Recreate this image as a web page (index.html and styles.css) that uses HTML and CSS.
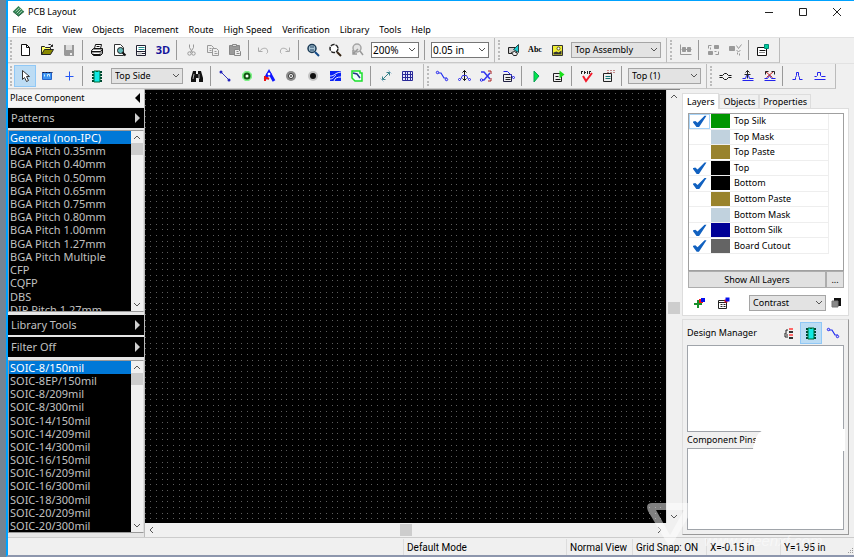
FILE: index.html
```html
<!DOCTYPE html>
<html lang="en">
<head>
<meta charset="utf-8">
<title>PCB Layout</title>
<link rel="stylesheet" href="styles.css">
</head>
<body>
<svg class="defs" aria-hidden="true">
  <symbol id="new" viewBox="-.5 -.5 16 16"><path d="M4 2h5l3 3v8H4z" fill="#fff" stroke="#111"/><path d="M9 2v3h3" fill="none" stroke="#111"/></symbol>
  <symbol id="open" viewBox="-.5 -.5 16 16"><path d="M2 12V4h3l1 1h5v2" fill="#ffff66" stroke="#222"/><path d="M2 12l3-5h9l-3 5z" fill="#8a8a00" stroke="#222"/><path d="M9 2h2l2 2m0-2v2h-2" fill="none" stroke="#222"/></symbol>
  <symbol id="save" viewBox="0 0 16 16"><path d="M3 3h10v11H4l-1-1z" fill="#999"/><path d="M5 3h6v5H5z" fill="#ddd"/><path d="M9 11h2v2H9z" fill="#eee"/></symbol>
  <symbol id="print" viewBox="-.5 -.5 16 16"><path d="M5 6l1-4h6l-1 4" fill="#fff" stroke="#111"/><path d="M2 8l2-2h9v5l-2 2H4l-2-2z" fill="#999" stroke="#111"/><path d="M3 8h8M4 11h6" stroke="#fff"/><path d="M2 9h9M3 12h8M11 9l2-2M7 4h3" stroke="#111"/></symbol>
  <symbol id="preview" viewBox="-.5 -.5 16 16"><path d="M3 2h6l3 3v8H3z" fill="#fff" stroke="#333"/><circle cx="9" cy="8" r="3" fill="#6bb" stroke="#222"/><path d="M11 10l3 3" stroke="#111" stroke-width="2"/></symbol>
  <symbol id="titles" viewBox="-.5 -.5 16 16"><path d="M3 3h9v10H3z" fill="#fff" stroke="#223"/><path d="M5 5h6M5 7h6" stroke="#288"/><path d="M3 9h9M8 11h4" stroke="#223"/><path d="M4 10h4v2H4z" fill="#bbb"/></symbol>
  <symbol id="cut" viewBox="-.5 -.5 16 16"><path d="M6 2v3l3 5M10 2v3l-3 5" stroke="#999" fill="none"/><circle cx="6" cy="11" r="1.700" fill="none" stroke="#999"/><circle cx="10" cy="11" r="1.700" fill="none" stroke="#999"/></symbol>
  <symbol id="copy" viewBox="-.5 -.5 16 16"><path d="M2 3h4l2 2v5H2z" fill="#eee" stroke="#999"/><path d="M7 6h4l2 2v5H7z" fill="#eee" stroke="#999"/><path d="M4 6h2M4 8h2M9 9h2M9 11h3" stroke="#999"/></symbol>
  <symbol id="paste" viewBox="-.5 -.5 16 16"><path d="M2 3h10v9H2z" fill="#999" stroke="#888"/><path d="M5 2h4v2H5z" fill="#ddd" stroke="#888"/><path d="M7 7h4l2 2v4H7z" fill="#eee" stroke="#888"/><path d="M9 9h2M9 11h3" stroke="#888"/></symbol>
  <symbol id="undo" viewBox="-.5 -.5 16 16"><path d="M3 5v4h4M4 9c2-4 9-5 8 1l-1 1" fill="none" stroke="#aaa"/></symbol>
  <symbol id="redo" viewBox="-.5 -.5 16 16"><path d="M12 5v4H8M11 9c-2-4-9-5-8 1l1 1" fill="none" stroke="#aaa"/></symbol>
  <symbol id="zoomwin" viewBox="0 0 16 16"><circle cx="7" cy="6.500" r="4" fill="#a8c4d4" stroke="#1a3a55" stroke-width="1.500"/><path d="M5 5h4M5 8h4" stroke="#246"/><path d="M10 10l4 4" stroke="#124a88" stroke-width="2"/></symbol>
  <symbol id="zoomin" viewBox="0 0 16 16"><circle cx="7" cy="6.500" r="4" fill="#fff" stroke="#222" stroke-width="1.500" stroke-dasharray="4 1"/><path d="M10 10l4 4" stroke="#321" stroke-width="2"/></symbol>
  <symbol id="zoomback" viewBox="0 0 16 16"><circle cx="8" cy="6" r="4" fill="#e4e4e4" stroke="#a5a5a5" stroke-width="1.500"/><path d="M11 9l3 4M4 12l5-5M4 8v4h4" stroke="#999" fill="none" stroke-width="1.500"/></symbol>
  <symbol id="place" viewBox="-.5 -.5 16 16"><path d="M3 5h8v6H3z" fill="#ccc" stroke="#222"/><path d="M8 7l5-5v8z" fill="#18cbd0" stroke="#244"/><path d="M6 10l3-1 3 2-1 2H8z" fill="#eee" stroke="#222"/></symbol>
  <symbol id="picture" viewBox="-.5 -.5 16 16"><path d="M3 3h10v10H3z" fill="#f1ee34" stroke="#333"/><path d="M4 12v-2l3-1 2 1 3-2v4z" fill="#333"/><circle cx="9" cy="6" r="1.500" fill="#fff" stroke="#552"/></symbol>
  <symbol id="align" viewBox="-.5 -.5 16 16"><path d="M3 2v10h11" fill="none" stroke="#999"/><path d="M5 5h3v4H5zM10 5h3v4h-3z" fill="#999" stroke="#999"/><path d="M4 7h10" stroke="#999"/></symbol>
  <symbol id="rotate" viewBox="-.5 -.5 16 16"><path d="M9 3h4v3H9zM3 9h4v3H3z" fill="#999" stroke="#999"/><path d="M3 6V3h3M5 7v-2M13 9v3h-3M9 9h2" fill="none" stroke="#999"/></symbol>
  <symbol id="unroute" viewBox="-.5 -.5 16 16"><path d="M2 4h5v4H2z" fill="#999" stroke="#999"/><path d="M9 3l2 3 3-4M9 8l2 1 2-1M10 12v-2M12 13v-2" fill="none" stroke="#999"/></symbol>
  <symbol id="report" viewBox="-.5 -.5 16 16"><path d="M2 5h9v8H2z" fill="#fff" stroke="#111"/><path d="M4 8h6" stroke="#111"/><path d="M4 10h6" stroke="#111" stroke-dasharray="1 1"/><path d="M9 2h4v4H9z" fill="#0c9" stroke="#087"/></symbol>
  <symbol id="pointer" viewBox="-.5 -.5 16 16"><path d="M5 2v9l2-2 2 4 2-1-2-4h3z" fill="#fff" stroke="#333"/></symbol>
  <symbol id="select" viewBox="-.5 -.5 16 16"><path d="M3 4h9v7H3z" fill="#3d94f2" stroke="#2463cc"/><path d="M3 4h10" stroke="#113" stroke-dasharray="2 1"/><path d="M8 8V6h2v2M5 6v2" stroke="#ceefff" fill="none"/></symbol>
  <symbol id="cross" viewBox="-.5 -.5 16 16"><path d="M8 3v9M4 8h8" stroke="#2457f5"/></symbol>
  <symbol id="chip" viewBox="0 0 16 16"><path d="M3 4h10M3 7h10M3 10h10M3 13h10" stroke="#043" stroke-width="2"/><path d="M5 3h6v11H5z" fill="#10e9e4" stroke="#063"/><path d="M7 3h2v1H7z" fill="#063"/></symbol>
  <symbol id="find" viewBox="0 0 16 16"><path d="M4 3h3v3h2V3h3l2 7v4h-4v-4H7v4H2v-4z" fill="#111"/><path d="M5 6l-1 5M10 6v5" stroke="#aaa"/></symbol>
  <symbol id="trace" viewBox="0 0 16 16"><path d="M4 4l8 8" stroke="#33b"/><circle cx="4" cy="4" r="1.500" fill="#22b"/><circle cx="12" cy="12" r="1.500" fill="#22b"/></symbol>
  <symbol id="via" viewBox="0 0 16 16"><path d="M3 6l3-3h4l3 3v4l-3 3H6l-3-3z" fill="#7df187"/><circle cx="8" cy="8" r="2.500" fill="#fff" stroke="#151" stroke-width="2"/></symbol>
  <symbol id="atrace" viewBox="0 0 16 16"><path d="M4 11L8 4l5 9" fill="none" stroke="#1018ff" stroke-width="3"/><circle cx="8" cy="6" r="2" fill="#fff" stroke="#00f"/><path d="M4 8v5M4 9l4 2" stroke="#f01010" stroke-width="2"/></symbol>
  <symbol id="pad" viewBox="0 0 16 16"><circle cx="8" cy="8" r="5" fill="#8b8b8b"/><circle cx="8" cy="8" r="2.500" fill="#fff" stroke="#333"/><circle cx="8" cy="8" r="1" fill="#444"/></symbol>
  <symbol id="hole" viewBox="0 0 16 16"><circle cx="8" cy="8" r="5" fill="#c4c4c4"/><circle cx="8" cy="8" r="3" fill="#111"/></symbol>
  <symbol id="pour" viewBox="0 0 16 16"><path d="M3 3h11v10H3z" fill="#0b22f5"/><path d="M3 8c5 0 4-3 11-4M3 11c4 0 4-3 6-4M7 13c1-3 3-4 7-4" stroke="#eef" fill="none"/></symbol>
  <symbol id="cutout" viewBox="0 0 16 16"><path d="M3 3h8v2h2v8H6l-3-3z" fill="#effffa" stroke="#1be02c" stroke-width="1.500"/><path d="M4 5l4 1 3 4" stroke="#238" stroke-width="1.500" fill="none"/></symbol>
  <symbol id="dimension" viewBox="-.5 -.5 16 16"><path d="M5 11l7-7M5 8v3h3M12 7V4H9" fill="none" stroke="#38828a"/><path d="M3 10l3 3M11 2l3 3" stroke="#9bc"/></symbol>
  <symbol id="table" viewBox="-.5 -.5 16 16"><path d="M3 3h10v9H3zM3 6h10M3 9h10M6 3v9M8 3v9M11 3v9" fill="#e4e4fa" stroke="#2a2a98"/></symbol>
  <symbol id="route" viewBox="0 0 16 16"><path d="M4 5h3l3 5h3" fill="none" stroke="#1f2df0" stroke-width="1.200"/><circle cx="3.500" cy="4.500" r="1.200" fill="#dde" stroke="#22e"/><circle cx="12.500" cy="11.500" r="1.200" fill="#dde" stroke="#22e"/></symbol>
  <symbol id="routeup" viewBox="-.5 -.5 16 16"><path d="M8 2v10M6 4l2-2 2 2M6 10l2 2 2-2" fill="none" stroke="#111"/><path d="M4 11l2-4h4l2 4" fill="none" stroke="#33d"/><circle cx="3" cy="11" r="1" fill="#fff" stroke="#22e"/><circle cx="13" cy="11" r="1" fill="#fff" stroke="#22e"/></symbol>
  <symbol id="routex" viewBox="0 0 16 16"><path d="M3 4h3l6 7M3 12h3l6-7" fill="none" stroke="#33e" stroke-width="1.500"/><path d="M10 3h3v3M10 13h3v-3" fill="none" stroke="#a22"/><circle cx="3.500" cy="12" r="1.200" fill="#fff" stroke="#22e"/></symbol>
  <symbol id="routesetup" viewBox="-.5 -.5 16 16"><path d="M3 6h8v7H3z" fill="#eee" stroke="#224"/><path d="M5 9h5M5 11h5" stroke="#222"/><path d="M3 3h4l5 5" stroke="#22e" fill="none"/><circle cx="13" cy="9" r="1" fill="#fff" stroke="#22e"/></symbol>
  <symbol id="run" viewBox="0 0 16 16"><path d="M6 3l5 5-5 6z" fill="#00e84b" stroke="#0a9e55"/></symbol>
  <symbol id="runsetup" viewBox="-.5 -.5 16 16"><path d="M3 5h8v8H3z" fill="#eee" stroke="#222"/><path d="M5 8h3M5 11h5" stroke="#111"/><path d="M9 2l5 4-5 4z" fill="#1be01c"/></symbol>
  <symbol id="drc" viewBox="0 0 16 16"><path d="M3 3h1v3H3zM4 3h1v1H4zM6 3h1v3H6zM7 4h1v1H7zM9 3h1v3H9zM11 3h1v3h-1zM12 3h1v1h-1z" fill="#222"/><path d="M5 8l3 5 6-8" fill="none" stroke="#f3192a" stroke-width="2"/></symbol>
  <symbol id="drcsetup" viewBox="-.5 -.5 16 16"><path d="M3 5h8v8H3z" fill="#eee" stroke="#222"/><path d="M5 8h5M5 10h5" stroke="#177"/><path d="M7 2h1M10 2h1M13 2h1M7 4h1M10 4h1M13 4h1" stroke="#922"/></symbol>
  <symbol id="diffpair" viewBox="-.5 -.5 16 16"><path d="M2 7h3l2-2h2l2 2h3M2 9h3l2 2h2l2-2h3" fill="none" stroke="#111"/></symbol>
  <symbol id="phase" viewBox="-.5 -.5 16 16"><path d="M3 12h11M3 10h3l1-3h2l1 3h4" fill="none" stroke="#22e"/><path d="M8 2v8M6 4l2-2 2 2M5 6h6" stroke="#222" fill="none"/></symbol>
  <symbol id="phasex" viewBox="-.5 -.5 16 16"><path d="M3 12h11M3 10h3l2-3 2 3h4" fill="none" stroke="#22e"/><path d="M4 3l7 6M12 3L5 9" stroke="#b22"/><path d="M4 6V3h3M10 3h3v3" fill="none" stroke="#222"/></symbol>
  <symbol id="pulse" viewBox="-.5 -.5 16 16"><path d="M3 11h3V9l1-2V4h2v3l1 2v2h3" fill="none" stroke="#22e"/></symbol>
  <symbol id="pulse2" viewBox="-.5 -.5 16 16"><path d="M3 11h11M3 8h2l1-1V4h3v3l1 1h4" fill="none" stroke="#22e"/></symbol>
  <symbol id="addlayer" viewBox="0 0 16 16"><path d="M7 5v8M3 9h8" stroke="#17902b" stroke-width="2"/><path d="M8 4h4v4H8z" fill="#f01515"/><path d="M10 3h4v4h-4z" fill="#0610ed"/></symbol>
  <symbol id="layerset" viewBox="-.5 -.5 16 16"><path d="M2 5h8v8H2zM2 7h8" fill="#fff" stroke="#222"/><path d="M4 9h5M4 11h5" stroke="#222" stroke-dasharray="2 1"/><path d="M8 4h3v3H8z" fill="#f01515"/><path d="M9 2h4v4H9z" fill="#0610ed"/></symbol>
  <symbol id="contrast" viewBox="0 0 16 16"><path d="M6 3h7v8H6z" fill="#111"/><path d="M4 6h6v6H4z" fill="#888" stroke="#777"/></symbol>
  <symbol id="tree" viewBox="0 0 16 16"><path d="M8 4h4M8 10h4" stroke="#f66" stroke-width="2"/><path d="M8 7h4M8 13h4" stroke="#333" stroke-width="2"/><path d="M7 5H5v2M6 8H4v4h3M5 10h2" fill="none" stroke="#222"/></symbol>
  <symbol id="down" viewBox="0 0 8 8"><path d="M1 2l3 3 3-3" fill="none" stroke="#555"/></symbol>
  <symbol id="logo" viewBox="0 0 14 14"><path d="M7 1l6 6-6 5-6-5z" fill="#2f8050"/><path d="M1 7l6 5 6-5" stroke="#256144" fill="none"/><path d="M4 7l4-4M5 9l5-5M7 10l4-4" stroke="#bce0c5"/></symbol>
</svg>

<div class="desktop">
<div class="window">
  <header class="titlebar">
    <svg class="logo"><use href="#logo"/></svg>
    <h1>PCB Layout</h1>
    <button class="wbtn" aria-label="Minimize"><svg viewBox="0 0 10 10"><path d="M1 5.500h8" stroke="#222"/></svg></button>
    <button class="wbtn" aria-label="Maximize"><svg viewBox="0 0 10 10"><path d="M1.500 1.500h7v7h-7z" fill="none" stroke="#222"/></svg></button>
    <button class="wbtn" aria-label="Close"><svg viewBox="0 0 10 10"><path d="M1 1l8 8M9 1l-8 8" stroke="#222"/></svg></button>
  </header>
  <nav class="menu">
    <button>File</button><button>Edit</button><button>View</button><button>Objects</button><button>Placement</button><button>Route</button><button>High Speed</button><button>Verification</button><button>Library</button><button>Tools</button><button>Help</button>
  </nav>

  <div class="bars">
    <div class="bar">
      <button class="tb" aria-label="New"><svg><use href="#new"/></svg></button>
      <button class="tb" aria-label="Open"><svg><use href="#open"/></svg></button>
      <button class="tb" aria-label="Save"><svg><use href="#save"/></svg></button>
      <i class="sep"></i>
      <button class="tb" aria-label="Print"><svg><use href="#print"/></svg></button>
      <button class="tb" aria-label="Preview"><svg><use href="#preview"/></svg></button>
      <button class="tb" aria-label="Titles"><svg><use href="#titles"/></svg></button>
      <button class="tb threed">3D</button>
      <i class="sep"></i>
      <button class="tb" aria-label="Cut"><svg><use href="#cut"/></svg></button>
      <button class="tb" aria-label="Copy"><svg><use href="#copy"/></svg></button>
      <button class="tb" aria-label="Paste"><svg><use href="#paste"/></svg></button>
      <i class="sep"></i>
      <button class="tb" aria-label="Undo"><svg><use href="#undo"/></svg></button>
      <button class="tb" aria-label="Redo"><svg><use href="#redo"/></svg></button>
      <i class="sep"></i>
      <button class="tb" aria-label="Zoom window"><svg><use href="#zoomwin"/></svg></button>
      <button class="tb" aria-label="Zoom in"><svg><use href="#zoomin"/></svg></button>
      <button class="tb" aria-label="Zoom back"><svg><use href="#zoomback"/></svg></button>
      <span class="combo white zoom"><select aria-label="Zoom"><option>200%</option></select><svg><use href="#down"/></svg></span>
      <i class="sep"></i>
      <span class="combo white grid"><select aria-label="Grid"><option>0.05 in</option></select><svg><use href="#down"/></svg></span>
    </div>
    <div class="bar">
      <button class="tb" aria-label="Place"><svg><use href="#place"/></svg></button>
      <button class="tb abc">Abc</button>
      <button class="tb" aria-label="Picture"><svg><use href="#picture"/></svg></button>
      <span class="combo assembly"><select aria-label="Drawing layer"><option>Top Assembly</option></select><svg><use href="#down"/></svg></span>
    </div>
    <div class="bar">
      <button class="tb" aria-label="Align"><svg><use href="#align"/></svg></button>
      <i class="sep"></i>
      <button class="tb" aria-label="Rotate"><svg><use href="#rotate"/></svg></button>
      <button class="tb" aria-label="Unroute"><svg><use href="#unroute"/></svg></button>
      <i class="sep"></i>
      <button class="tb" aria-label="Report"><svg><use href="#report"/></svg></button>
    </div>
  </div>
  <div class="bars">
    <div class="bar">
      <button class="tb on" aria-label="Pointer"><svg><use href="#pointer"/></svg></button>
      <button class="tb" aria-label="Select"><svg><use href="#select"/></svg></button>
      <button class="tb" aria-label="Origin"><svg><use href="#cross"/></svg></button>
      <i class="sep"></i>
      <button class="tb" aria-label="Component"><svg><use href="#chip"/></svg></button>
      <span class="combo side"><select aria-label="Side"><option>Top Side</option></select><svg><use href="#down"/></svg></span>
      <button class="tb" aria-label="Find"><svg><use href="#find"/></svg></button>
      <i class="sep"></i>
      <button class="tb" aria-label="Ratline"><svg><use href="#trace"/></svg></button>
      <button class="tb" aria-label="Via"><svg><use href="#via"/></svg></button>
      <button class="tb" aria-label="Static via"><svg><use href="#atrace"/></svg></button>
      <button class="tb" aria-label="Pad"><svg><use href="#pad"/></svg></button>
      <button class="tb" aria-label="Mounting hole"><svg><use href="#hole"/></svg></button>
      <button class="tb" aria-label="Copper pour"><svg><use href="#pour"/></svg></button>
      <button class="tb" aria-label="Board outline"><svg><use href="#cutout"/></svg></button>
      <i class="sep"></i>
      <button class="tb" aria-label="Dimension"><svg><use href="#dimension"/></svg></button>
      <button class="tb" aria-label="Table"><svg><use href="#table"/></svg></button>
    </div>
    <div class="bar">
      <button class="tb" aria-label="Route manual"><svg><use href="#route"/></svg></button>
      <button class="tb" aria-label="Edit traces"><svg><use href="#routeup"/></svg></button>
      <button class="tb" aria-label="Free edit"><svg><use href="#routex"/></svg></button>
      <button class="tb" aria-label="Route setup"><svg><use href="#routesetup"/></svg></button>
      <i class="sep"></i>
      <button class="tb" aria-label="Run autorouter"><svg><use href="#run"/></svg></button>
      <button class="tb" aria-label="Autorouter setup"><svg><use href="#runsetup"/></svg></button>
      <i class="sep"></i>
      <button class="tb" aria-label="Check rules"><svg><use href="#drc"/></svg></button>
      <button class="tb" aria-label="Rules setup"><svg><use href="#drcsetup"/></svg></button>
      <i class="sep"></i>
      <span class="combo layer"><select aria-label="Current layer"><option>Top (1)</option></select><svg><use href="#down"/></svg></span>
    </div>
    <div class="bar">
      <button class="tb" aria-label="Differential pair"><svg><use href="#diffpair"/></svg></button>
      <button class="tb" aria-label="Phase tuning"><svg><use href="#phase"/></svg></button>
      <button class="tb" aria-label="Delete phase"><svg><use href="#phasex"/></svg></button>
      <i class="sep"></i>
      <button class="tb" aria-label="Meander"><svg><use href="#pulse"/></svg></button>
      <button class="tb" aria-label="Pair meander"><svg><use href="#pulse2"/></svg></button>
    </div>
  </div>

  <main class="work">
    <aside class="left">
      <div class="place-head"><span>Place Component</span><i class="tri back"></i></div>
      <button class="fold">Patterns<i class="tri"></i></button>
      <div class="listbox first">
        <ul>
          <li class="sel">General (non-IPC)</li><li>BGA Pitch 0.35mm</li><li>BGA Pitch 0.40mm</li><li>BGA Pitch 0.50mm</li><li>BGA Pitch 0.65mm</li><li>BGA Pitch 0.75mm</li><li>BGA Pitch 0.80mm</li><li>BGA Pitch 1.00mm</li><li>BGA Pitch 1.27mm</li><li>BGA Pitch Multiple</li><li>CFP</li><li>CQFP</li><li>DBS</li><li>DIP Pitch 1.27mm</li>
        </ul>
        <div class="vbar"><svg class="up"><use href="#down"/></svg><i class="thumb"></i><svg class="end"><use href="#down"/></svg></div>
      </div>
      <button class="fold">Library Tools<i class="tri"></i></button>
      <button class="fold">Filter Off<i class="tri"></i></button>
      <div class="listbox second">
        <ul>
          <li class="sel">SOIC-8/150mil</li><li>SOIC-8EP/150mil</li><li>SOIC-8/209mil</li><li>SOIC-8/300mil</li><li>SOIC-14/150mil</li><li>SOIC-14/209mil</li><li>SOIC-14/300mil</li><li>SOIC-16/150mil</li><li>SOIC-16/209mil</li><li>SOIC-16/300mil</li><li>SOIC-18/300mil</li><li>SOIC-20/209mil</li><li>SOIC-20/300mil</li>
        </ul>
        <div class="vbar"><svg class="up"><use href="#down"/></svg><i class="thumb"></i><svg class="end"><use href="#down"/></svg></div>
      </div>
    </aside>

    <section class="board">
      <svg class="dots" aria-label="Board grid">
        <defs><pattern id="grid" x="5" y="3" width="17" height="17" patternUnits="userSpaceOnUse">
          <path d="M0 0h1v1H0zM6 0h1v1H6zM12 0h1v1h-1zM0 6h1v1H0zM6 6h1v1H6zM12 6h1v1h-1zM0 12h1v1H0zM6 12h1v1H6zM12 12h1v1h-1z" fill="#5c5c5c"/>
        </pattern></defs>
        <rect width="100%" height="100%" fill="#000"/><rect width="100%" height="100%" fill="url(#grid)"/>
      </svg>
      <div class="vbar"><svg class="up"><use href="#down"/></svg><i class="thumb mid"></i><svg class="end"><use href="#down"/></svg></div>
      <div class="hbar"><svg class="lt"><use href="#down"/></svg><i class="thumb"></i><svg class="rt"><use href="#down"/></svg></div>
    </section>

    <aside class="right">
      <div class="tabs"><button class="tab cur">Layers</button><button class="tab">Objects</button><button class="tab">Properties</button></div>
      <div class="pane">
        <div class="layers">
          <div class="rows">
            <label class="row focus"><input type="checkbox" checked><i class="sw silk"></i><span>Top Silk</span></label>
            <label class="row"><input type="checkbox"><i class="sw mask"></i><span>Top Mask</span></label>
            <label class="row"><input type="checkbox"><i class="sw paste"></i><span>Top Paste</span></label>
            <label class="row"><input type="checkbox" checked><i class="sw copper"></i><span>Top</span></label>
            <label class="row"><input type="checkbox" checked><i class="sw copper"></i><span>Bottom</span></label>
            <label class="row"><input type="checkbox"><i class="sw paste"></i><span>Bottom Paste</span></label>
            <label class="row"><input type="checkbox"><i class="sw mask"></i><span>Bottom Mask</span></label>
            <label class="row"><input type="checkbox" checked><i class="sw bsilk"></i><span>Bottom Silk</span></label>
            <label class="row"><input type="checkbox" checked><i class="sw board-cut"></i><span>Board Cutout</span></label>
          </div>
        </div>
        <div class="show"><button>Show All Layers</button><button class="more">...</button></div>
        <div class="tools">
          <button class="tb" aria-label="Add layer"><svg><use href="#addlayer"/></svg></button>
          <button class="tb" aria-label="Layer setup"><svg><use href="#layerset"/></svg></button>
          <span class="combo contrast"><select aria-label="Display mode"><option>Contrast</option></select><svg><use href="#down"/></svg></span>
          <button class="tb small" aria-label="Colors"><svg><use href="#contrast"/></svg></button>
        </div>
      </div>
      <div class="manager">
        <div class="mhead"><h2>Design Manager</h2>
          <button class="tb" aria-label="Tree"><svg><use href="#tree"/></svg></button>
          <button class="tb on" aria-label="Components"><svg><use href="#chip"/></svg></button>
          <button class="tb" aria-label="Nets"><svg><use href="#route"/></svg></button>
        </div>
        <div class="box comps"></div>
        <h2 class="pins-head">Component Pins</h2>
        <div class="box pins"></div>
        <svg class="blot" viewBox="0 0 93 22" preserveAspectRatio="none" aria-hidden="true"><path d="M0 22c0-6 2-8 3-13C5 4 8 1 15 0h78v22z" fill="#fff"/></svg>
      </div>
    </aside>
  </main>

  <footer class="status">
    <span class="s0"></span><span class="s1">Default Mode</span><span class="s2">Normal View</span><span class="s3">Grid Snap: ON</span><span class="s4">X=-0.15 in</span><span class="s4">Y=1.95 in</span>
    <svg class="sizer" viewBox="0 0 8 8"><path d="M6 1h1v1H6zM4 3h1v1H4zM6 3h1v1H6zM2 5h1v1H2zM4 5h1v1H4zM6 5h1v1H6z" fill="#999"/></svg>
  </footer>
  <svg class="mark" viewBox="0 0 208 52" aria-hidden="true">
    <path d="M6 0h38q6 0 3 6L27 40q-3 4-6 0L2 8Q-1 0 6 0zM10 7l14 25L38 7z" fill="#fff" fill-opacity=".5" fill-rule="evenodd"/>
    <text x="58" y="43">www.greenxf.com</text>
  </svg>
</div>
</div>
</body>
</html>
```
FILE: styles.css
```css
* { box-sizing: border-box; }
body {
  margin: 0;
  font: 9px/14px "Noto Sans", "Open Sans", sans-serif;
  color: #000;
}
button, select, input {
  font: inherit;
  color: inherit;
  margin: 0;
  padding: 0;
  border: 0;
  background: none;
  border-radius: 0;
}
h1, h2, ul { margin: 0; padding: 0; font: inherit; list-style: none; }
i { font-style: normal; }
.defs { position: absolute; width: 0; height: 0; }

.desktop {
  height: 100vh;
  padding-left: 6px;
  background: #748494;
}
.window {
  position: relative;
  height: 100%;
  display: flex;
  flex-direction: column;
  background: #f0f0f0;
  border-top: 1px solid #00a2ff;
  border-left: 2px solid #00a2ff;
  border-bottom: 2px solid #8d96ad;
}

.titlebar {
  display: flex;
  align-items: center;
  height: 21px;
  background: #fff;
}
.logo { width: 13px; height: 13px; margin: 0 3px 0 4px; }
.titlebar h1 { flex: 1; }
.wbtn { width: 34px; height: 20px; display: grid; place-items: center; }
.wbtn svg { width: 10px; height: 10px; }
.menu {
  display: flex;
  gap: 10px;
  height: 15px;
  padding-left: 4px;
  background: #fff;
}

.bars { display: flex; height: 26px; border-top: 1px solid #e2e2e2; }
.bar {
  display: flex;
  align-items: center;
  padding: 0 5px 0 6px;
  border-right: 1px solid #bbb;
  border-bottom: 1px solid #c8c8c8;
}
.bar::before {
  content: "";
  height: 20px;
  margin-left: -4px;
  margin-right: 2px;
  border-left: 2px dotted #bbb;
}
.bar + .bar { padding-left: 7px; }
.tb {
  flex: none;
  width: 22px;
  height: 22px;
  display: grid;
  place-items: center;
}
.tb svg { width: 16px; height: 16px; }
.tb.on { background: #bcdcf4; border: 1px solid #90c8f6; }
.threed { font: bold 11px/14px "Open Sans", sans-serif; color: #15159a; }
.abc { font: bold 8px/12px "Liberation Serif", serif; }
.sep { width: 6px; height: 20px; border-left: 1px solid #999; border-right: 3px solid transparent; margin-left: 2px; margin-right: -2px; }

.combo {
  position: relative;
  flex: none;
  height: 16px;
  margin: 0 3px;
  border: 1px solid #a5a5a5;
  background: #e3e3e3;
}
.combo.white { background: #fff; border-color: #777; font-size: 10px; }
.combo select {
  appearance: none;
  width: 100%;
  height: 100%;
  padding-left: 3px;
  line-height: 14px;
  display: block;
}
.combo.white select { padding-left: 1px; }
.combo svg { position: absolute; right: 2px; top: 3px; width: 8px; height: 8px; pointer-events: none; }
.zoom { width: 48px; }
.grid { width: 58px; margin-right: 0; }
.assembly { width: 90px; margin-right: 0; }
.side { width: 72px; }
.layer { width: 73px; margin-right: 0; }

.work {
  flex: 1;
  min-height: 0;
  display: grid;
  grid-template-columns: 137px 1fr 174px;
}
.left {
  display: flex;
  flex-direction: column;
  gap: 2px;
  padding: 1px 0 4px;
  min-height: 0;
  border-right: 1px solid #bbb;
  background: #e6e6e6;
}
.place-head {
  display: flex;
  justify-content: space-between;
  align-items: center;
  height: 17px;
  margin-bottom: -1px;
  padding: 0 4px 1px 2px;
  background: #f4f4f4;
}
.fold {
  flex: none;
  display: flex;
  justify-content: space-between;
  align-items: center;
  height: 20px;
  padding: 0 4px 0 3px;
  background: #000;
  color: #c0c0c0;
  font-size: 11px;
}
.tri { border: 5px solid transparent; border-left-color: #d0d0d0; border-right: 0; }
.back { border-left: 0; border-right: 5px solid #000; }
.listbox {
  display: flex;
  min-height: 0;
  border: 1px solid #999;
  border-right-color: #ddd;
  background: #000;
  overflow: hidden;
  margin-bottom: 1px;
}
.first { flex: 183 1 0; }
.second { flex: 174 1 0; margin: 1px 0 0; }
.listbox ul {
  flex: 1;
  display: grid;
  grid-auto-rows: 1fr;
  color: #c0c0c0;
  font-size: 11px;
}
.first ul { height: calc(100% + 5px); }
.listbox li { padding-left: 1px; line-height: 13px; white-space: nowrap; min-height: 0; }
.listbox .sel { background: #0078d7; color: #fff; }
.vbar {
  flex: none;
  width: 12px;
  display: flex;
  flex-direction: column;
  align-items: center;
  background: #f0f0f0;
}
.vbar svg, .hbar svg { flex: none; width: 8px; height: 8px; margin: 2px; }
.up { transform: rotate(180deg); }
.vbar .end { margin-top: auto; }
.thumb { width: 12px; height: 12px; background: #cdcdcd; }

.board {
  display: grid;
  grid-template-columns: 1fr 14px;
  grid-template-rows: 1fr 14px;
  min-width: 0;
  min-height: 0;
  border-top: 1px solid #888;
}
.dots { grid-area: 1 / 1; width: 100%; height: 100%; display: block; }
.board .vbar { grid-area: 1 / 2; width: 14px; border-left: 1px solid #ddd; }
.mid { margin-top: auto; }
.hbar { grid-area: 2 / 1; display: flex; align-items: center; justify-content: space-between; }
.lt { transform: rotate(90deg); }
.rt { transform: rotate(-90deg); }

.right {
  display: flex;
  flex-direction: column;
  padding: 4px 5px 2px 2px;
  min-height: 0;
}
.tabs { display: flex; align-items: flex-end; height: 15px; }
.tab {
  height: 14px;
  line-height: 13px;
  padding: 0 3px;
  border: 1px solid #ddd;
  border-bottom: 0;
}
.cur { height: 16px; padding: 0 4px; margin-bottom: -1px; background: #fff; position: relative; }
.pane {
  height: 208px;
  padding: 4px 4px 0 5px;
  border: 1px solid #ddd;
  background: #fff;
}
.layers { height: 158px; border: 1px solid #a0a0a0; }
.rows { display: grid; grid-auto-rows: 1fr; height: 140px; width: 91%; }
.row {
  display: flex;
  align-items: center;
  min-height: 0;
  border-bottom: 1px solid #eee;
  border-right: 1px solid #eee;
}
.row input {
  appearance: none;
  width: 21px;
  height: 100%;
  margin-right: 1px;
  display: grid;
  place-items: center;
}
.focus input { border: 1px solid #a8d4f8; }
.row input:checked::before {
  content: "";
  width: 14px;
  height: 12px;
  background: #1161c0;
  clip-path: polygon(0 53%, 20% 47%, 36% 62%, 86% 4%, 100% 4%, 46% 100%, 30% 100%);
}
.sw { width: 19px; height: 14px; margin-right: 4px; }
.silk { background: #009600; }
.mask { background: #c1d2de; }
.paste { background: #99832d; }
.copper { background: #000; }
.bsilk { background: #000096; }
.board-cut { background: #646464; }
.show { display: flex; }
.show button { flex: 1; height: 17px; background: #e1e1e1; border: 1px solid #adadad; }
.show .more { flex: 0 0 18px; }
.tools { display: flex; align-items: center; margin-top: 4px; }
.tools .tb + .tb { margin-left: 3px; }
.contrast { width: 77px; margin: 0 2px 0 auto; }
.tools .small { width: 16px; }

.manager {
  position: relative;
  flex: 1;
  display: flex;
  flex-direction: column;
  min-height: 0;
  margin-top: 3px;
  padding: 1px 4px 4px 4px;
  border: 1px solid #ddd;
  border-right-color: #999;
  border-bottom-color: #999;
}
.mhead { display: flex; align-items: center; height: 24px; flex: none; }
.mhead h2 { flex: 1; }
.box { background: #fff; border: 1px solid #a0a4aa; }
.comps { flex: 88; }
.pins { flex: 83; }
.pins-head { height: 16px; line-height: 16px; flex: none; }
.blot { position: absolute; right: 3px; bottom: 83px; width: 92px; height: 22px; }

.status {
  display: flex;
  flex: none;
  height: 18px;
  padding-top: 1px;
  border-top: 1px solid #ccc;
  position: relative;
  font: 10px/17px Roboto, sans-serif;
}
.status span { padding-left: 3px; border-left: 1px solid #ddd; white-space: nowrap; }
.status .s0 { flex: 397; border: 0; }
.s1 { flex: 161; }
.s2 { flex: 0 0 66px; }
.s3 { flex: 0 0 74px; }
.s4 { flex: 0 0 74px; }
.sizer { position: absolute; right: 0; bottom: 0; width: 8px; height: 8px; }
.mark { position: absolute; right: 0; bottom: 0; width: 208px; height: 52px; pointer-events: none; }
.mark text { font: italic 15px "Liberation Sans", sans-serif; fill: #fff; fill-opacity: .5; }
```
